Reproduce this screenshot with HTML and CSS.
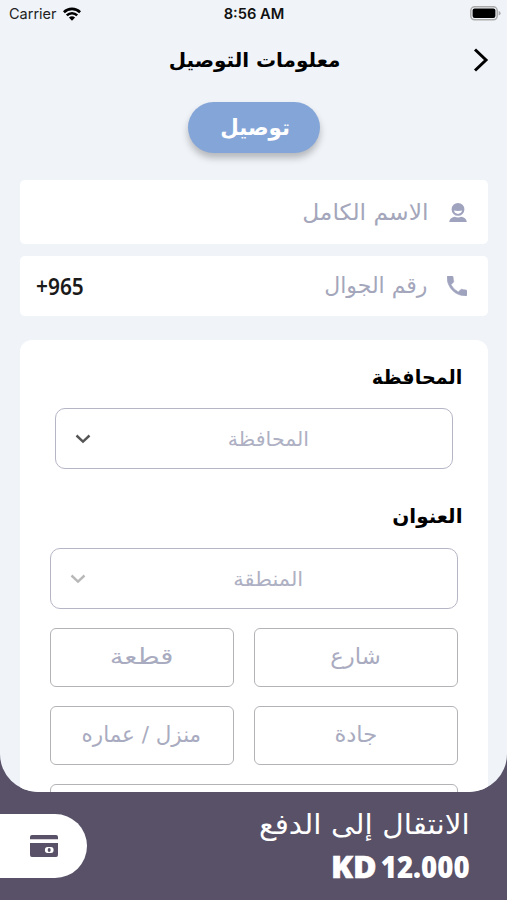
FILE: index.html
```html
<!DOCTYPE html>
<html lang="ar" dir="rtl">
<head>
<meta charset="utf-8">
<title>معلومات التوصيل</title>
<link rel="stylesheet" href="styles.css">
</head>
<body>
<div class="app">
  <main class="screen">
    <div class="status" dir="ltr">
      <div class="carrier"><span>Carrier</span>
        <svg width="18" height="14" viewBox="0 0 18 14"><g fill="none" stroke="#000" stroke-width="2.6"><path d="M.9 5.200a11.600 11.600 0 0 1 16.200 0"/><path d="M3.800 8.400a7.400 7.400 0 0 1 10.400 0"/></g><path d="M9 13.800 5.900 10.600a4.500 4.500 0 0 1 6.200 0z"/></svg>
      </div>
      <div class="clock">8:56 AM</div>
      <svg class="battery" width="31" height="15" viewBox="0 0 31 15"><rect x=".8" y=".8" width="26.400" height="13" rx="3.800" fill="#f0f4f9" stroke="#aaa" stroke-width="1.500"/><rect x="2.600" y="2.600" width="22.800" height="9.400" rx="2" fill="#000"/><path d="M28.600 5v4.600q2-.6 2-2.300t-2-2.300z" fill="#aaa"/></svg>
    </div>
    <header class="nav">
      <h1><span class="t">معلومات التوصيل</span></h1>
      <svg class="back" width="16" height="26" viewBox="0 0 16 26"><path d="M2 2.500 13 13 2 23.500" fill="none" stroke="#000" stroke-width="3"/></svg>
    </header>
    <button class="pill"><span class="t t-pill">توصيل</span></button>
    <div class="field name">
      <svg width="18" height="20" viewBox="0 0 18 20"><path fill="#9fa3bd" fill-rule="evenodd" d="M9 0a6.400 6.400 0 1 1 0 12.800A6.400 6.400 0 0 1 9 0zM5 7.600c.6 4.400 7.400 4.400 8 0-2 .6-6 .6-8 0z"/><path fill="#9fa3bd" d="M.2 19c.3-3 2.200-4.300 5.300-5.200Q9 15.200 12.500 13.800c3.100.9 5 2.200 5.300 5.200z"/></svg>
      <span class="t t-name">الاسم الكامل</span>
    </div>
    <div class="field phone">
      <svg width="20" height="20" viewBox="3 3 18 18"><path fill="#9fa3bd" stroke="#9fa3bd" stroke-width=".5" d="M6.620 10.790a15.150 15.150 0 0 0 6.590 6.590l2.200-2.200a1 1 0 0 1 1.020-.24c1.120.37 2.330.57 3.570.57a1 1 0 0 1 1 1V20a1 1 0 0 1-1 1A17 17 0 0 1 3 4a1 1 0 0 1 1-1h3.500a1 1 0 0 1 1 1c0 1.250.2 2.450.57 3.570a1 1 0 0 1-.25 1.020z"/></svg>
      <span class="t">رقم الجوال</span>
      <span class="code" dir="ltr"><span class="t t-code">+965</span></span>
    </div>
    <section class="card">
      <h2 class="h-gov"><span class="t t-gov">المحافظة</span></h2>
      <div class="select gov"><span class="t t-govph">المحافظة</span>
        <svg class="chev" width="16" height="10" viewBox="0 0 16 10"><path d="M1.500 1.500 8 7.600l6.500-6.100" fill="none" stroke="#555" stroke-width="2.400"/></svg></div>
      <h2 class="h-addr"><span class="t">العنوان</span></h2>
      <div class="select area"><span class="t t-area">المنطقة</span>
        <svg class="chev" width="16" height="10" viewBox="0 0 16 10"><path d="M1.500 1.500 8 7.600l6.500-6.100" fill="none" stroke="#b8b8b8" stroke-width="2.400"/></svg></div>
      <div class="grid">
        <div class="box"><span class="t t-street">شارع</span></div>
        <div class="box"><span class="t t-block">قطعة</span></div>
        <div class="box"><span class="t t-ave">جادة</span></div>
        <div class="box"><span class="t t-house">منزل / عماره</span></div>
        <div class="box wide"></div>
      </div>
    </section>
  </main>
  <footer class="pay">
    <div class="sum">
      <div class="go"><span class="t t-go">الانتقال إلى الدفع</span></div>
      <div class="price" dir="ltr"><span class="t t-kd">KD</span> <span class="t t-price">12.000</span></div>
    </div>
    <div class="tab">
      <svg width="28" height="22" viewBox="0 0 28 22"><path fill="#585168" d="M2 0h24q2 0 2 2v2.200H0V2q0-2 2-2z"/><path fill="#585168" fill-rule="evenodd" d="M0 8h28v12q0 2-2 2H2q-2 0-2-2zM17.500 12q-2.600 0-2.600 3t2.600 3h3.500q2.600 0 2.600-3t-2.600-3z"/><ellipse cx="19.200" cy="15" rx="1.500" ry="1.900" fill="#585168"/></svg>
    </div>
  </footer>
</div>
</body>
</html>
```
FILE: styles.css
```css
* { box-sizing: border-box; }
body { margin: 0; font-family: "DejaVu Sans", sans-serif; background: #585168; }
svg { display: block; flex: none; }
h1, h2 { margin: 0; }
.app { width: 507px; height: 900px; overflow: hidden; display: flex; flex-direction: column; background: #585168; }
.screen { height: 792px; flex: none; overflow: hidden; background: #f0f4f9; border-radius: 0 0 38px 38px; display: flex; flex-direction: column; align-items: center; }
.t { display: inline-block; white-space: nowrap; transform-origin: right center; }

.status { width: 100%; height: 28px; flex: none; display: grid; grid-template-columns: 1fr auto 1fr; align-items: center; padding: 0 6px 1px 9px; font-family: Inter, sans-serif; font-size: 14.500px; }
.carrier { display: flex; gap: 6px; align-items: center; color: #222; }
.clock { font-weight: 600; color: #111; font-size: 14.700px; padding-right: 2px; }
.battery { justify-self: end; }

.nav { width: 100%; height: 64px; flex: none; display: grid; grid-template-columns: 34px 1fr 34px; align-items: center; }
.nav h1 { grid-column: 2; grid-row: 1; text-align: center; font-size: 20px; line-height: 30px; padding-left: 2px; }
.back { grid-column: 1; grid-row: 1; margin-right: 18px; }

.pill { border: 0; margin: 10px 0 0; padding: 0; width: 132px; height: 51px; flex: none; border-radius: 26px; background: #84a5d8; color: #fff; font: bold 22px "DejaVu Sans", sans-serif; box-shadow: 0 5px 7px rgba(0,0,0,.25); }
.t-pill { transform: scaleX(.97); }

.field { width: 468px; flex: none; background: #fff; border-radius: 5px; display: flex; align-items: center; padding: 0 21px 0 16px; color: #a4a6bb; }
.name { height: 64px; margin-top: 27px; gap: 20px; font-size: 22.500px; padding-bottom: 1px; }
.name svg { margin-top: 3px; }
.t-name { transform: scaleX(1.04); }
.phone { height: 60px; margin-top: 12px; gap: 19px; font-size: 22px; padding-bottom: 1px; }
.code { margin-right: auto; color: #1a1a1a; font: 600 24px/30px "Noto Sans", sans-serif; width: 48px; }
.t-code { transform-origin: left center; transform: scaleX(.87); }

.card { width: 468px; height: 600px; flex: none; margin-top: 24px; background: #fff; border-radius: 12px 12px 0 0; padding: 0 30px; }
.card h2 { font-size: 20px; line-height: 30px; margin-right: -5px; }
.h-gov { padding-top: 22px; }
.t-gov { transform: scaleX(.96); }
.h-addr { padding-top: 32px; }
.select { height: 61px; border: 1.500px solid #b5b5c6; border-radius: 10px; display: grid; grid-template-columns: 1fr; align-items: center; color: #aeb0c3; font-size: 20px; }
.select > * { grid-area: 1 / 1; }
.select .t { justify-self: center; transform-origin: center; }
.t-govph { transform: translateX(15px) scaleX(1.03); }
.t-area { transform: translateX(15px) scaleX(1.05); }
.chev { justify-self: end; margin-left: 19px; margin-top: 1px; }
.gov { margin: 16px 5px 0; }
.area { margin-top: 17px; }
.grid { display: grid; grid-template-columns: 204px 184px; column-gap: 20px; row-gap: 19px; margin-top: 19px; }
.box { height: 59px; border: 1.500px solid #b3b3b7; border-radius: 6px; display: flex; align-items: center; justify-content: center; font-size: 22px; color: #a9abc0; padding-bottom: 3px; }
.box .t { transform-origin: center; }
.t-street { transform: scaleX(1.03); }
.t-block { transform: scaleX(1.25); }
.t-ave { transform: scaleX(1.03); }
.t-house { transform: scaleX(.975); }
.wide { grid-column: 1 / 3; }

.pay { height: 108px; display: flex; justify-content: space-between; color: #fff; }
.sum { padding: 14px 37px 0 0; }
.go { font-size: 28px; line-height: 38px; }
.t-go { transform: scaleX(1.055); }
.price { font: 800 30px/40px "Open Sans", sans-serif; text-align: right; margin-top: 3px; }
.t-price { transform: scaleX(.92); }
.t-kd { transform: translateX(11px) scaleX(1.07); -webkit-text-stroke: .6px #fff; }
.tab { width: 87px; height: 64px; margin-top: 22px; background: #fff; border-radius: 0 32px 32px 0; display: flex; align-items: center; justify-content: flex-end; padding-left: 30px; }
```
